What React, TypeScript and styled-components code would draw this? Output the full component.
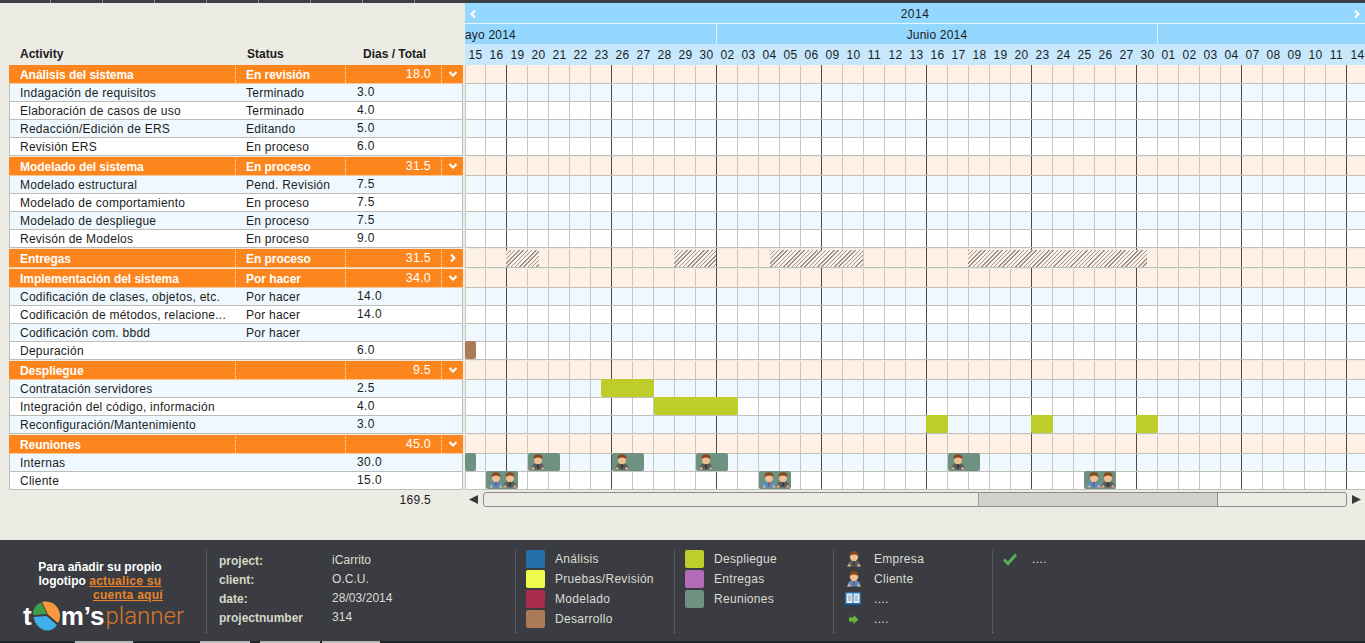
import { Fragment } from "react";
import styled, { createGlobalStyle } from "styled-components";

const GlobalStyle = createGlobalStyle`
html, body {
  margin: 0;
  padding: 0;
  background: #ecebe4;
}
* {
  box-sizing: border-box;
}
`;

const CELL = 21;
const CHART_LEFT = 465;

const days = [
  "15", "16", "19", "20", "21", "22", "23", "26", "27", "28", "29", "30", "02", "03", "04",
  "05", "06", "09", "10", "11", "12", "13", "16", "17", "18", "19", "20", "23", "24", "25",
  "26", "27", "30", "01", "02", "03", "04", "07", "08", "09", "10", "11", "14",
];

type Bar = { from: number; to: number; kind: "brown" | "lime" | "meet"; people?: ("client" | "staff")[] };

type Task = { name: string; status?: string; days?: string; bars?: Bar[] };

type Section = {
  name: string;
  status: string;
  total: string;
  closed?: boolean;
  hatch?: [number, number][];
  tasks: Task[];
};

const sections: Section[] = [
  {
    name: "Análisis del sistema",
    status: "En revisión",
    total: "18.0",
    tasks: [
      { name: "Indagación de requisitos", status: "Terminado", days: "3.0" },
      { name: "Elaboración de casos de uso", status: "Terminado", days: "4.0" },
      { name: "Redacción/Edición de ERS", status: "Editando", days: "5.0" },
      { name: "Revisión ERS", status: "En proceso", days: "6.0" },
    ],
  },
  {
    name: "Modelado del sistema",
    status: "En proceso",
    total: "31.5",
    tasks: [
      { name: "Modelado estructural", status: "Pend. Revisión", days: "7.5" },
      { name: "Modelado de comportamiento", status: "En proceso", days: "7.5" },
      { name: "Modelado de despliegue", status: "En proceso", days: "7.5" },
      { name: "Revisón de Modelos", status: "En proceso", days: "9.0" },
    ],
  },
  {
    name: "Entregas",
    status: "En proceso",
    total: "31.5",
    closed: true,
    hatch: [[506, 539], [674, 716], [770, 863], [968, 1147]],
    tasks: [],
  },
  {
    name: "Implementación del sistema",
    status: "Por hacer",
    total: "34.0",
    tasks: [
      { name: "Codificación de clases, objetos, etc.", status: "Por hacer", days: "14.0" },
      { name: "Codificación de métodos, relacione...", status: "Por hacer", days: "14.0" },
      { name: "Codificación com. bbdd", status: "Por hacer" },
      { name: "Depuración", days: "6.0", bars: [{ from: 465, to: 476, kind: "brown" }] },
    ],
  },
  {
    name: "Despliegue",
    status: "",
    total: "9.5",
    tasks: [
      { name: "Contratación servidores", days: "2.5", bars: [{ from: 601, to: 654, kind: "lime" }] },
      { name: "Integración del código, información", days: "4.0", bars: [{ from: 654, to: 738, kind: "lime" }] },
      {
        name: "Reconfiguración/Mantenimiento",
        days: "3.0",
        bars: [
          { from: 926, to: 948, kind: "lime" },
          { from: 1031, to: 1053, kind: "lime" },
          { from: 1136, to: 1158, kind: "lime" },
        ],
      },
    ],
  },
  {
    name: "Reuniones",
    status: "",
    total: "45.0",
    tasks: [
      {
        name: "Internas",
        days: "30.0",
        bars: [
          { from: 465, to: 476, kind: "meet" },
          { from: 528, to: 560, kind: "meet", people: ["staff"] },
          { from: 612, to: 644, kind: "meet", people: ["staff"] },
          { from: 696, to: 728, kind: "meet", people: ["staff"] },
          { from: 948, to: 980, kind: "meet", people: ["staff"] },
        ],
      },
      {
        name: "Cliente",
        days: "15.0",
        bars: [
          { from: 486, to: 518, kind: "meet", people: ["client", "staff"] },
          { from: 759, to: 791, kind: "meet", people: ["client", "staff"] },
          { from: 1084, to: 1116, kind: "meet", people: ["client", "staff"] },
        ],
      },
    ],
  },
];

const barColors = { brown: "#ab7a58", lime: "#bfcd2a", meet: "#6f9181" };

const Page = styled.div`
  width: 1365px;
  height: 643px;
  overflow: hidden;
  display: flex;
  flex-direction: column;
  font-family: "Liberation Sans", Arial, sans-serif;
  font-size: 12px;
  color: #1c1c1c;
`;

const TopBar = styled.div`
  height: 3px;
  flex: none;
  background: repeating-linear-gradient(90deg, #3c4046 0 50px, #8a8a8a 50px 51px, #3c4046 51px 52px) 0 0 / 465px 100% no-repeat #3c4046;
`;

const Main = styled.div`
  height: 537px;
  flex: none;
  display: flex;
`;

const LeftPanel = styled.div`
  width: 465px;
  flex: none;
  padding: 0 2px 0 9px;
`;

const Columns = styled.div`
  display: grid;
  grid-template-columns: 226px 110px 96px 22px;
  align-items: center;
`;

const ListHead = styled(Columns)`
  height: 62px;
  align-items: end;
  padding-bottom: 4px;
  font-weight: 700;
  line-height: 14px;
`;

const HeadCell = styled.div<{ $pad: number }>`
  padding-left: ${(p) => p.$pad}px;
  white-space: nowrap;
`;

const Block = styled.div`
  margin-bottom: 1px;
`;

const GroupRow = styled(Columns)`
  height: 19px;
  background: #fd851e;
  border-bottom: 1px solid #f5c596;
  color: #fff;
`;

const GroupCell = styled.div<{ $sep?: boolean }>`
  height: 17px;
  line-height: 18px;
  padding-left: ${(p) => (p.$sep ? 10 : 11)}px;
  font-weight: 700;
  letter-spacing: -0.05px;
  white-space: nowrap;
  border-left: ${(p) => (p.$sep ? "1px dotted #ffe9d2" : "none")};
`;

const GroupTotal = styled(GroupCell)`
  font-weight: 400;
  text-align: right;
  padding-right: 10px;
  line-height: 16px;
  font-size: 12.5px;
  letter-spacing: 0.2px;
`;

const GroupToggle = styled(GroupCell)`
  padding-left: 6px;
  display: flex;
  align-items: center;
`;

const TaskRow = styled(Columns)<{ $odd: boolean }>`
  height: 18px;
  background: ${(p) => (p.$odd ? "#eef8fe" : "#fff")};
  border: 1px solid #bdbdb8;
  border-top: none;
  letter-spacing: 0.25px;
`;

const TaskCell = styled.div`
  padding-left: 10px;
  height: 17px;
  white-space: nowrap;
  overflow: hidden;
  line-height: 19px;
`;

const StatusCell = styled(TaskCell)`
  padding-left: 10px;
`;

const DaysCell = styled(TaskCell)`
  padding-left: 11px;
  line-height: 17px;
  letter-spacing: 0.4px;
`;

const GrandTotal = styled.div`
  width: 422px;
  padding-top: 2px;
  text-align: right;
  line-height: 14px;
  letter-spacing: 0.3px;
`;

const ChartPanel = styled.div`
  width: 900px;
  flex: none;
  overflow: hidden;
`;

const YearBar = styled.div`
  height: 21px;
  background: #94d8ff;
  border-bottom: 1px solid #e6f6ff;
  display: flex;
  align-items: center;
  justify-content: space-between;
  padding: 1px 3px 0;
  letter-spacing: 0.5px;
`;

const MonthBar = styled.div`
  height: 20px;
  display: flex;
  background: #94d8ff;
  letter-spacing: 0.2px;
`;

const Month = styled.div<{ $w: number; $left?: boolean }>`
  width: ${(p) => p.$w}px;
  flex: none;
  line-height: 22px;
  text-align: ${(p) => (p.$left ? "left" : "center")};
  border-right: 1px solid #dff3ff;
`;

const DayBar = styled.div`
  height: 21px;
  display: flex;
  background: #c6e7fc;
`;

const Day = styled.div`
  width: ${CELL}px;
  flex: none;
  text-align: center;
  line-height: 22px;
  letter-spacing: 0.4px;
`;

const ChartBody = styled.div`
  position: relative;
  background: linear-gradient(90deg, #4a4a4a 1px, transparent 1px) 41px 0 / 105px 100% repeat-x;
`;

const ChartBlock = styled.div`
  margin-bottom: 1px;
`;

const Track = styled.div<{ $h: number; $bg: string }>`
  position: relative;
  height: ${(p) => p.$h}px;
  display: flex;
  background: ${(p) => p.$bg};
  border-bottom: 1px solid #c2bfb9;
`;

const Cell = styled.div<{ $dark: boolean; $first: boolean }>`
  width: ${CELL}px;
  flex: none;
  border-right: 1px solid ${(p) => (p.$dark ? "#4a4a4a" : "#c8c5bf")};
  border-left: ${(p) => (p.$first ? "1px solid #c8c5bf" : "none")};
`;

const Hatch = styled.div<{ $left: number; $w: number }>`
  position: absolute;
  top: 1px;
  height: 17px;
  left: ${(p) => p.$left}px;
  width: ${(p) => p.$w}px;
  background: repeating-linear-gradient(135deg, #98938e 0 1px, #fff0e6 1px 3px);
`;

const TaskBar = styled.div<{ $left: number; $w: number; $kind: Bar["kind"] }>`
  position: absolute;
  top: -1px;
  height: 18px;
  left: ${(p) => p.$left}px;
  width: ${(p) => p.$w}px;
  background: ${(p) => barColors[p.$kind]};
  border-radius: 2px;
  display: flex;
  align-items: center;
  padding-left: 2px;
`;

const Scroller = styled.div`
  height: 16px;
  margin-top: 1px;
  display: flex;
  align-items: center;
  gap: 4px;
  padding-left: 4px;
`;

const ScrollTrack = styled.div`
  width: 864px;
  height: 15px;
  flex: none;
  border: 1px solid #8c8c88;
  border-radius: 3px;
  background: #ecebe4;
`;

const ScrollThumb = styled.div`
  margin-left: 494px;
  width: 240px;
  height: 13px;
  background: #d2d1cc;
  border-left: 1px solid #9a9a96;
  border-right: 1px solid #8c8c88;
`;

const Footer = styled.div`
  height: 101px;
  flex: none;
  display: flex;
  background: #3a3c41;
  padding-top: 10px;
  color: #dcdcd4;
`;

const LogoBlock = styled.div`
  width: 206px;
  flex: none;
  padding: 10px 0 0 23px;
`;

const Promo = styled.div`
  width: 154px;
  font-size: 12px;
  font-weight: 700;
  line-height: 14px;
  color: #fff;
  text-align: center;
`;

const PromoLink = styled.span`
  color: #e8842c;
  text-decoration: underline;
  letter-spacing: 0.3px;
`;

const PromoLastLine = styled.div`
  text-align: right;
  padding-right: 14px;
`;

const Logo = styled.div`
  display: flex;
  align-items: center;
  margin-top: -1px;
  height: 30px;
  line-height: 30px;
  font-size: 26px;
  white-space: nowrap;
`;

const LogoStrong = styled.span`
  font-weight: 700;
  color: #fff;
`;

const LogoThin = styled.span`
  font-family: Roboto, "Liberation Sans", sans-serif;
  font-weight: 300;
  font-size: 24px;
  color: #d9782a;
  margin-left: 1px;
`;

const FooterColumn = styled.div<{ $w: number }>`
  width: ${(p) => p.$w}px;
  flex: none;
  height: 83px;
  border-left: 1px dotted #74767a;
  padding-left: 10px;
`;

const Info = styled.div`
  display: grid;
  grid-template-columns: 113px auto;
  grid-auto-rows: 19px;
  padding: 2px 0 0 2px;
`;

const InfoLabel = styled.div`
  font-weight: 700;
  line-height: 18px;
  color: #d6d8c8;
`;

const InfoValue = styled.div`
  line-height: 16px;
  letter-spacing: 0.05px;
`;

const LegendRow = styled.div`
  height: 20px;
  display: flex;
  align-items: flex-start;
`;

const Swatch = styled.div<{ $color: string }>`
  width: 19px;
  height: 18px;
  flex: none;
  margin-right: 10px;
  background: ${(p) => p.$color};
  border-radius: 2px;
`;

const LegendIcon = styled.div`
  width: 18px;
  height: 18px;
  flex: none;
  margin-right: 12px;
  display: flex;
  align-items: center;
  justify-content: center;
`;

const CheckIcon = styled(LegendIcon)`
  margin-left: -2px;
  margin-right: 13px;
`;

const LegendText = styled.span`
  line-height: 19px;
  letter-spacing: 0.3px;
`;

const BottomStrip = styled.div`
  height: 2px;
  flex: none;
  background: linear-gradient(
    90deg,
    #23262b 75px,
    #b8b8b8 75px 133px,
    #23262b 133px 200px,
    #b8b8b8 200px 250px,
    #23262b 250px 260px,
    #b8b8b8 260px 320px,
    #23262b 320px 322px,
    #b8b8b8 322px 380px,
    #23262b 380px
  );
`;

const Chevron = ({ dir }: { dir: "down" | "right" | "left" }) => {
  const d = dir === "down" ? "M1.5 3 L5 6.5 L8.5 3" : dir === "right" ? "M3 1.5 L6.5 5 L3 8.5" : "M7 1.5 L3.5 5 L7 8.5";
  return (
    <svg width="10" height="10" viewBox="0 0 10 10" fill="none">
      <path d={d} stroke="#fff" strokeWidth="2" />
    </svg>
  );
};

const Person = ({ kind, size = 16 }: { kind: "client" | "staff"; size?: number }) => {
  const body = kind === "client" ? "#4d8fcb" : "#5a5c5c";
  const inner = kind === "client" ? "#b53a3a" : "#303234";
  return (
    <svg width={size} height={size} viewBox="0 0 16 16" style={{ flex: "none", marginRight: -2 }}>
      <path d="M1.5 15.5 C1.5 10.5 4 9.5 8 9.5 C12 9.5 14.5 10.5 14.5 15.5 Z" fill={body} />
      <path d="M7 9.5 H9 L8.6 14.5 H7.4 Z" fill={inner} />
      <path d="M1 15.5 L3.5 12.5 L5 15.5 Z M15 15.5 L12.5 12.5 L11 15.5 Z" fill="#e2b48a" />
      <ellipse cx="8" cy="5.5" rx="4.2" ry="4.8" fill="#eebf94" />
      <path d="M3.6 6 C3 1.2 5.8 0.2 8 0.2 C10.2 0.2 13 1.2 12.4 6 C11.6 4 9.8 3.4 8 3.4 C6.2 3.4 4.4 4 3.6 6 Z" fill="#86491d" />
    </svg>
  );
};

const Book = () => (
  <svg width="16" height="14" viewBox="0 0 16 14">
    <rect x="0" y="0" width="16" height="13" fill="#2c6ca8" />
    <rect x="1.5" y="1.5" width="6" height="9.5" fill="#e8f0f6" />
    <rect x="8.5" y="1.5" width="6" height="9.5" fill="#e8f0f6" />
    <path d="M3 4 H6.5 M3 6 H6.5 M3 8 H6.5 M9.5 4 H13 M9.5 6 H13 M9.5 8 H13" stroke="#7c9cb8" strokeWidth="1" />
    <rect x="0" y="12.5" width="16" height="1.5" fill="#173e63" />
  </svg>
);

const GreenArrow = () => (
  <svg width="11" height="11" viewBox="0 0 11 11">
    <path d="M1 3.5 H5.5 V1 L10.5 5.5 L5.5 10 V7.5 H1 Z" fill="#6bb53c" />
  </svg>
);

const Check = () => (
  <svg width="16" height="14" viewBox="0 0 16 14" fill="none">
    <path d="M2 7.5 L6 11.5 L14 2.5" stroke="#54b058" strokeWidth="3" />
  </svg>
);

const Triangle = ({ dir }: { dir: "left" | "right" }) => (
  <svg width="10" height="11" viewBox="0 0 10 11" style={{ flex: "none" }}>
    <path d={dir === "left" ? "M0 5.5 L9 1 V10 Z" : "M10 5.5 L1 1 V10 Z"} fill="#3a3a3a" />
  </svg>
);

const Pie = () => (
  <svg width="29" height="30" viewBox="0 0 29 30" style={{ flex: "none" }}>
    <path d="M15 13 L9 1.5 C3.5 3.5 0.5 8.5 1 14 Z" fill="#3f9e4a" />
    <path d="M16 13.5 L10 1 C17 -1 27 3 28 14 C28.2 17 27 20.5 26 22 Z" fill="#f79a3e" />
    <path d="M14.5 15 L1.5 16 C3 24 9 29.5 15 29.5 C19.5 29.5 23 27.5 25 24 Z" fill="#3fb0ea" />
  </svg>
);

const Cells = () => (
  <>
    {days.map((_, i) => (
      <Cell key={i} $first={i === 0} $dark={(i - 1) % 5 === 0 && i > 0} />
    ))}
  </>
);

const info = [
  ["project:", "iCarrito"],
  ["client:", "O.C.U."],
  ["date:", "28/03/2014"],
  ["projectnumber", "314"],
];

const legendA = [
  ["#2470ab", "Análisis"],
  ["#eefc4e", "Pruebas/Revisión"],
  ["#a92c4c", "Modelado"],
  ["#ab7a58", "Desarrollo"],
];

const legendB = [
  ["#bfcd2a", "Despliegue"],
  ["#b36cb8", "Entregas"],
  ["#6f9181", "Reuniones"],
];

const App = () => {
  return (
    <Page>
      <GlobalStyle />
      <TopBar />
      <Main>
        <LeftPanel>
          <ListHead>
            <HeadCell $pad={11}>Activity</HeadCell>
            <HeadCell $pad={12}>Status</HeadCell>
            <HeadCell $pad={18}>Dias / Total</HeadCell>
          </ListHead>
          {sections.map((s) => (
            <Block key={s.name}>
              <GroupRow>
                <GroupCell>{s.name}</GroupCell>
                <GroupCell $sep>{s.status}</GroupCell>
                <GroupTotal $sep>{s.total}</GroupTotal>
                <GroupToggle $sep>
                  <Chevron dir={s.closed ? "right" : "down"} />
                </GroupToggle>
              </GroupRow>
              {s.tasks.map((t, i) => (
                <TaskRow key={t.name} $odd={i % 2 === 0}>
                  <TaskCell>{t.name}</TaskCell>
                  <StatusCell>{t.status}</StatusCell>
                  <DaysCell>{t.days}</DaysCell>
                </TaskRow>
              ))}
            </Block>
          ))}
          <GrandTotal>169.5</GrandTotal>
        </LeftPanel>
        <ChartPanel>
          <YearBar>
            <Chevron dir="left" />
            <span>2014</span>
            <Chevron dir="right" />
          </YearBar>
          <MonthBar>
            <Month $w={252} $left>ayo 2014</Month>
            <Month $w={441}>Junio 2014</Month>
          </MonthBar>
          <DayBar>
            {days.map((d, i) => (
              <Day key={i}>{d}</Day>
            ))}
          </DayBar>
          <ChartBody>
            {sections.map((s) => (
              <ChartBlock key={s.name}>
                <Track $h={19} $bg="#fff0e6">
                  <Cells />
                  {s.hatch?.map(([a, b]) => (
                    <Hatch key={a} $left={a - CHART_LEFT} $w={b - a} />
                  ))}
                </Track>
                {s.tasks.map((t, i) => (
                  <Track key={t.name} $h={18} $bg={i % 2 === 0 ? "#eef8fe" : "#fff"}>
                    <Cells />
                    {t.bars?.map((b) => (
                      <TaskBar key={b.from} $left={b.from - CHART_LEFT} $w={b.to - b.from} $kind={b.kind}>
                        {b.people?.map((p, j) => (
                          <Person key={j} kind={p} />
                        ))}
                      </TaskBar>
                    ))}
                  </Track>
                ))}
              </ChartBlock>
            ))}
          </ChartBody>
          <Scroller>
            <Triangle dir="left" />
            <ScrollTrack>
              <ScrollThumb />
            </ScrollTrack>
            <Triangle dir="right" />
          </Scroller>
        </ChartPanel>
      </Main>
      <Footer>
        <LogoBlock>
          <Promo>
            Para añadir su propio
            <br />
            logotipo <PromoLink>actualice su</PromoLink>
            <PromoLastLine>
              <PromoLink>cuenta aquí</PromoLink>
            </PromoLastLine>
          </Promo>
          <Logo>
            <LogoStrong>t</LogoStrong>
            <Pie />
            <LogoStrong>m’s</LogoStrong>
            <LogoThin>planner</LogoThin>
          </Logo>
        </LogoBlock>
        <FooterColumn $w={309}>
          <Info>
            {info.map(([k, v]) => (
              <Fragment key={k}>
                <InfoLabel>{k}</InfoLabel>
                <InfoValue>{v}</InfoValue>
              </Fragment>
            ))}
          </Info>
        </FooterColumn>
        <FooterColumn $w={159}>
          {legendA.map(([c, t]) => (
            <LegendRow key={t}>
              <Swatch $color={c} />
              <LegendText>{t}</LegendText>
            </LegendRow>
          ))}
        </FooterColumn>
        <FooterColumn $w={159}>
          {legendB.map(([c, t]) => (
            <LegendRow key={t}>
              <Swatch $color={c} />
              <LegendText>{t}</LegendText>
            </LegendRow>
          ))}
        </FooterColumn>
        <FooterColumn $w={159}>
          <LegendRow>
            <LegendIcon><Person kind="staff" /></LegendIcon>
            <LegendText>Empresa</LegendText>
          </LegendRow>
          <LegendRow>
            <LegendIcon><Person kind="client" /></LegendIcon>
            <LegendText>Cliente</LegendText>
          </LegendRow>
          <LegendRow>
            <LegendIcon><Book /></LegendIcon>
            <LegendText>....</LegendText>
          </LegendRow>
          <LegendRow>
            <LegendIcon><GreenArrow /></LegendIcon>
            <LegendText>....</LegendText>
          </LegendRow>
        </FooterColumn>
        <FooterColumn $w={373}>
          <LegendRow>
            <CheckIcon><Check /></CheckIcon>
            <LegendText>....</LegendText>
          </LegendRow>
        </FooterColumn>
      </Footer>
      <BottomStrip />
    </Page>
  );
};

export default App;
